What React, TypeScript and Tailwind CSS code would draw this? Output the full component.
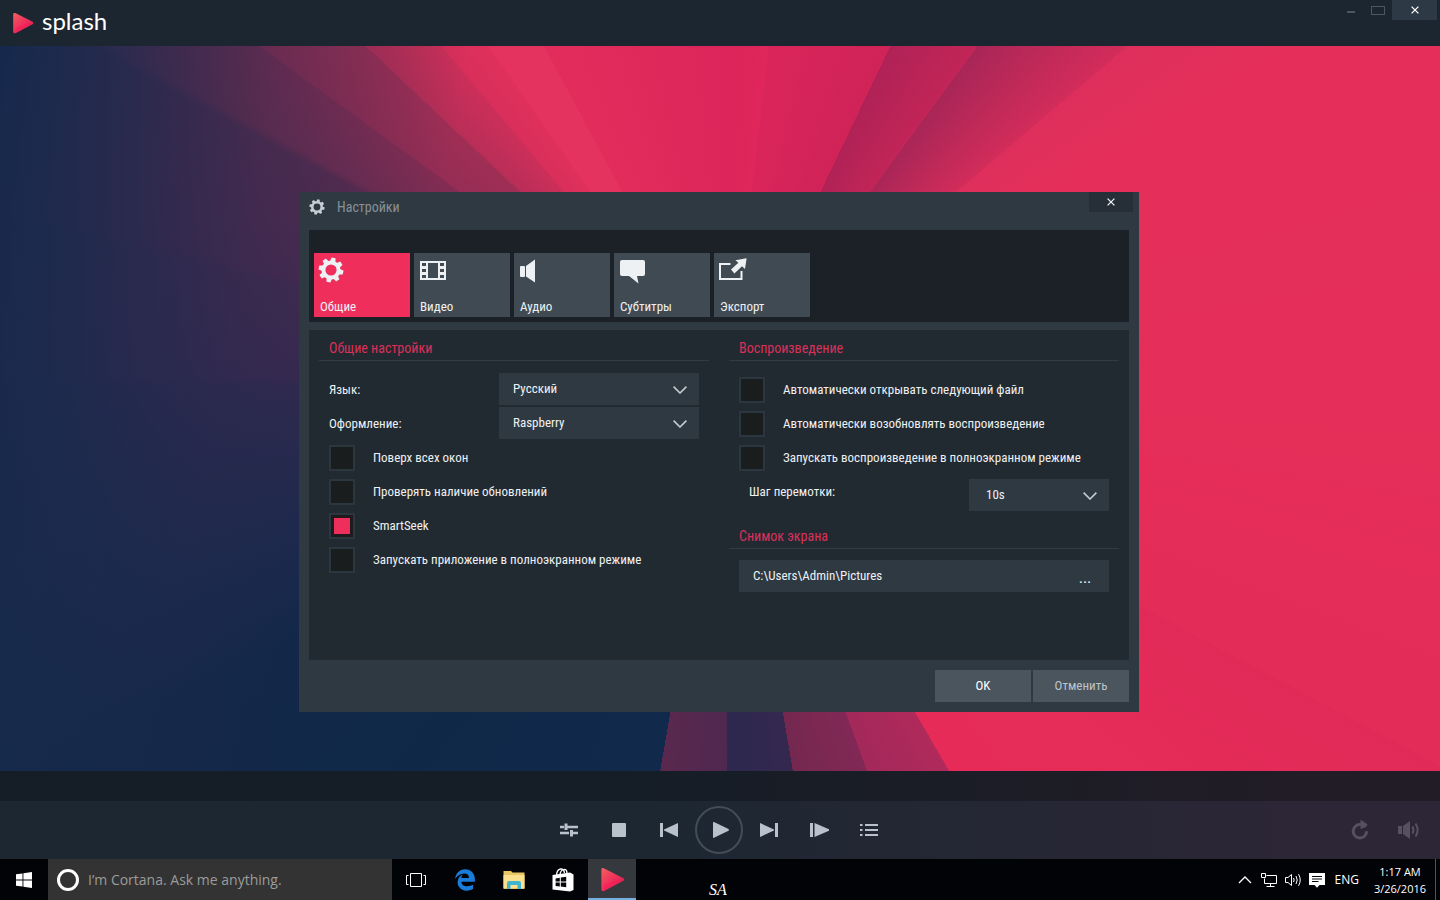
import type { ReactNode } from "react";
import { useState } from "react";
import { FaEdgeLegacy } from "react-icons/fa";

function PlayLogo({ className }: { className?: string }) {
  return (
    <svg viewBox="0 0 22 22" className={className} aria-hidden="true">
      <defs>
        <linearGradient id="play-logo" x1="0" y1="0" x2="1" y2="1">
          <stop offset="0" stopColor="#f0605f" />
          <stop offset="0.5" stopColor="#f0305c" />
          <stop offset="1" stopColor="#c81f4e" />
        </linearGradient>
      </defs>
      <path
        d="M1.2 1.6 Q1.6 0.6 3.4 1 L20.6 9.8 Q22.2 11 20.6 12.2 L4 21 Q1.6 21.8 1.2 20 Z"
        fill="url(#play-logo)"
      />
      <path d="M3.6 15.5 L17.5 10.8 L20 12 L3.6 20.4Z" fill="#ff0d55" opacity="0.35" />
    </svg>
  );
}

function Gear({ className }: { className?: string }) {
  const teeth = [0, 45, 90, 135, 180, 225, 270, 315];
  return (
    <svg viewBox="0 0 26 26" className={className} fill="currentColor" aria-hidden="true">
      <circle cx="13" cy="13" r="7.6" fill="none" stroke="currentColor" strokeWidth="4" />
      {teeth.map((deg) => (
        <path key={deg} d="M10.2 5 L11 0.6 H15 L15.8 5Z" transform={`rotate(${deg + 12} 13 13)`} />
      ))}
    </svg>
  );
}

function Cross({ className }: { className?: string }) {
  return (
    <svg viewBox="0 0 8 8" className={className} stroke="currentColor" strokeWidth="1.3" aria-hidden="true">
      <path d="M0.6 0.6 L7.4 7.4 M7.4 0.6 L0.6 7.4" />
    </svg>
  );
}

const TABS: { id: string; label: string; icon: ReactNode }[] = [
  { id: "general", label: "Общие", icon: <Gear className="size-[26px]" /> },
  {
    id: "video",
    label: "Видео",
    icon: (
      <svg viewBox="0 0 32 28" className="h-7 w-8" fill="currentColor" aria-hidden="true">
        <path
          fillRule="evenodd"
          d="M2 4H28V23H2Z M10 6V21H20V6Z M4 6V9H8V6Z M4 12V15H8V12Z M4 18V21H8V18Z M22 6V9H26V6Z M22 12V15H26V12Z M22 18V21H26V18Z"
        />
      </svg>
    ),
  },
  {
    id: "audio",
    label: "Аудио",
    icon: (
      <svg viewBox="0 0 32 28" className="h-7 w-8" fill="currentColor" aria-hidden="true">
        <rect x="2" y="9" width="5" height="11" rx="1" />
        <path d="M8 9 L17 2.4 V25.6 L8 19.5Z" />
      </svg>
    ),
  },
  {
    id: "subtitles",
    label: "Субтитры",
    icon: (
      <svg viewBox="0 0 32 28" className="h-7 w-8" fill="currentColor" aria-hidden="true">
        <path d="M4 3H25Q27 3 27 5V17Q27 19 25 19H19L20.5 26.5L11 19H4Q2 19 2 17V5Q2 3 4 3Z" />
      </svg>
    ),
  },
  {
    id: "export",
    label: "Экспорт",
    icon: (
      <svg viewBox="0 0 32 28" className="h-7 w-8" aria-hidden="true">
        <path d="M12.5 7H2V22H23.5V14" fill="none" stroke="currentColor" strokeWidth="2" />
        <path
          d="M28.6 1.2 L27 12 L24 9.2 L16.4 16.4 L13 12.6 L20.4 5.8 L17.4 3.2Z"
          fill="currentColor"
        />
      </svg>
    ),
  },
];

function SectionTitle({ children }: { children: ReactNode }) {
  return (
    <h2 className="mx-2.5 h-[31px] border-b border-[#323c45] px-2.5 pt-2 text-sm text-[#da3059]">
      {children}
    </h2>
  );
}

function CheckRow({ id, label, checked }: { id: string; label: string; checked?: boolean }) {
  return (
    <div className="flex h-[34px] items-center gap-[18px]">
      <input
        id={id}
        type="checkbox"
        defaultChecked={checked}
        className="size-[26px] appearance-none border-2 border-[#2c363f] bg-[#191d1e] checked:bg-[#ee2f5b] checked:shadow-[inset_0_0_0_3px_#20191e]"
      />
      <label htmlFor={id}>{label}</label>
    </div>
  );
}

function Select({ id, options, className }: { id: string; options: string[]; className: string }) {
  return (
    <div className={`relative ${className}`}>
      <select id={id} className="h-8 w-full appearance-none bg-[#2f3942] pr-9 pl-3.5 outline-none">
        {options.map((o) => (
          <option key={o}>{o}</option>
        ))}
      </select>
      <svg
        viewBox="0 0 14 8"
        className="pointer-events-none absolute top-[13px] right-3 h-2 w-3.5"
        fill="none"
        stroke="#c3cad0"
        strokeWidth="1.6"
        aria-hidden="true"
      >
        <path d="M0.6 0.6 L7 7 L13.4 0.6" />
      </svg>
    </div>
  );
}

function SettingsDialog() {
  const [tab, setTab] = useState("general");

  return (
    <section
      role="dialog"
      aria-label="Настройки"
      className="w-[840px] bg-[#2f3941] px-2.5 pb-2.5 font-['Roboto_Condensed','Roboto',sans-serif] text-[13px] leading-5 text-[#eef1f3]"
    >
      <header className="flex h-[38px] items-start justify-between">
        <div className="flex items-center gap-3 pt-[5px]">
          <Gear className="size-4 text-[#c6cdd3]" />
          <h1 className="text-sm text-[#87919a]">Настройки</h1>
        </div>
        <button
          type="button"
          aria-label="Закрыть"
          className="-mr-1 flex h-5 w-11 items-center justify-center bg-[#262f38]"
        >
          <Cross className="size-2" />
        </button>
      </header>

      <nav className="flex gap-1 bg-[#1c2127] px-[5px] pt-[23px] pb-[5px]">
        {TABS.map((t) => (
          <button
            key={t.id}
            type="button"
            onClick={() => setTab(t.id)}
            className={`flex h-16 w-24 flex-col items-start justify-between px-1 pt-1 text-left ${
              tab === t.id ? "bg-[#f02e5b]" : "bg-[#404a52]"
            }`}
          >
            {t.icon}
            <span className="px-0.5">{t.label}</span>
          </button>
        ))}
      </nav>

      <div className="mt-2 grid min-h-[330px] grid-cols-2 bg-[#222a31]">
        <div>
          <SectionTitle>Общие настройки</SectionTitle>
          <div className="px-5 pt-3">
            <div className="flex h-[34px] justify-between">
              <label htmlFor="language" className="self-center">
                Язык:
              </label>
              <Select id="language" options={["Русский", "English"]} className="w-[200px]" />
            </div>
            <div className="flex h-[34px] justify-between">
              <label htmlFor="theme" className="self-center">
                Оформление:
              </label>
              <Select id="theme" options={["Raspberry"]} className="w-[200px]" />
            </div>
            <CheckRow id="on-top" label="Поверх всех окон" />
            <CheckRow id="updates" label="Проверять наличие обновлений" />
            <CheckRow id="smartseek" label="SmartSeek" checked />
            <CheckRow id="app-fullscreen" label="Запускать приложение в полноэкранном режиме" />
          </div>
        </div>

        <div>
          <SectionTitle>Воспроизведение</SectionTitle>
          <div className="px-5 pt-3">
            <CheckRow id="open-next" label="Автоматически открывать следующий файл" />
            <CheckRow id="resume" label="Автоматически возобновлять воспроизведение" />
            <CheckRow id="play-fullscreen" label="Запускать воспроизведение в полноэкранном режиме" />
            <div className="flex items-start justify-between pl-2.5">
              <label htmlFor="seek-step" className="pt-[7px]">
                Шаг перемотки:
              </label>
              <Select id="seek-step" options={["10s", "30s"]} className="mt-1 w-[140px] [&>select]:pl-[17px]" />
            </div>
          </div>
          <div className="pt-[7px]">
            <SectionTitle>Снимок экрана</SectionTitle>
            <div className="mx-5 mt-[11px] flex h-8 bg-[#2f3942]">
              <input
                type="text"
                aria-label="Снимок экрана"
                defaultValue="C:\Users\Admin\Pictures"
                className="min-w-0 flex-1 pl-3.5 outline-none"
              />
              <button type="button" aria-label="Обзор" className="w-12 pt-1 text-base">
                ...
              </button>
            </div>
          </div>
        </div>
      </div>

      <footer className="mt-2.5 flex justify-end gap-0.5">
        <button type="button" className="h-8 w-24 bg-[#4b555d] text-white">
          OK
        </button>
        <button type="button" className="h-8 w-24 bg-[#4b555d] text-[#bcc4ca]">
          Отменить
        </button>
      </footer>
    </section>
  );
}

const CONTROLS: { label: string; icon: ReactNode }[] = [
  {
    label: "Equalizer",
    icon: (
      <g stroke="currentColor">
        <path d="M2 9H6M9 9H20M2 15H11M15 15H20" strokeWidth="2.6" />
        <path d="M8 5.5V12M13.5 12V18.5" strokeWidth="3" />
      </g>
    ),
  },
  { label: "Stop", icon: <rect x="4" y="5" width="14" height="14" rx="1" /> },
  { label: "Previous", icon: <path d="M2 5H5V19H2Z M20 5V19L6 12.6V11.4Z" /> },
  { label: "Play", icon: <path d="M5 4.5 Q5 3.6 6 4 L20.5 11 Q21.5 12 20.5 12.8 L6 19.8 Q5 20.2 5 19.3Z" /> },
  { label: "Next", icon: <path d="M17 5H20V19H17Z M2 5V19L16 12.6V11.4Z" /> },
  { label: "Frame step", icon: <path d="M2 5H5V19H2Z M6.5 5L21 11.2V12.8L6.5 19Z" /> },
  {
    label: "Playlist",
    icon: (
      <path
        d="M2 7H4.5M7 7H20M2 12H4.5M7 12H20M2 17H4.5M7 17H20"
        stroke="currentColor"
        strokeWidth="2"
      />
    ),
  },
];

function PlayerControls() {
  return (
    <div className="grid h-[58px] grid-cols-[1fr_auto_1fr] items-center bg-linear-to-r from-[#1c2732] from-45% to-[#2c2636] to-90% pr-0.5 text-[#b9c1cb]">
      <div />
      <div className="flex items-center">
        {CONTROLS.map((c) => (
          <button
            key={c.label}
            type="button"
            aria-label={c.label}
            className={`flex h-12 items-center justify-center ${
              c.label === "Play" ? "mx-px w-12 rounded-full border-2 border-[#434d57]" : "w-[50px]"
            }`}
          >
            <svg viewBox="0 0 22 24" className="h-6 w-[22px]" fill="currentColor" aria-hidden="true">
              {c.icon}
            </svg>
          </button>
        ))}
      </div>
      <div className="flex justify-end gap-6 pr-4 text-[#555160]">
        <button type="button" aria-label="Repeat">
          <svg viewBox="0 0 24 24" className="size-6" fill="none" aria-hidden="true">
            <path d="M14.5 6.6 H12 A6.7 6.7 0 1 0 18.6 13.2" stroke="currentColor" strokeWidth="3" />
            <path d="M12.5 1.6 L19.6 6.4 L18 9 L12.5 11Z" fill="currentColor" />
          </svg>
        </button>
        <button type="button" aria-label="Volume">
          <svg viewBox="0 0 26 24" className="h-6 w-[26px]" fill="currentColor" aria-hidden="true">
            <path d="M2 8H6V16H2Z M7 8L14 3V21L7 16Z" />
            <path
              d="M16.5 8.5Q18.5 12 16.5 15.5M19.5 5.5Q23.8 12 19.5 18.5"
              fill="none"
              stroke="currentColor"
              strokeWidth="2"
            />
          </svg>
        </button>
      </div>
    </div>
  );
}

function Taskbar() {
  return (
    <footer className="flex h-[41px] items-stretch bg-[#020306] font-['Open_Sans','Noto_Sans',sans-serif] text-white">
      <button type="button" aria-label="Start" className="flex w-12 items-center justify-center">
        <svg viewBox="0 0 16 16" className="size-4" fill="currentColor" aria-hidden="true">
          <path d="M0 2.3L6.5 1.4V7.5H0Z M7.4 1.2L16 0V7.5H7.4Z M0 8.4H6.5V14.6L0 13.7Z M7.4 8.4H16V16L7.4 14.8Z" />
        </svg>
      </button>

      <label className="flex w-[344px] items-center gap-[9px] bg-[#333333] pl-[9px]">
        <span className="size-[22px] rounded-full border-[3px] border-white" />
        <input
          type="search"
          aria-label="Cortana"
          placeholder="I’m Cortana. Ask me anything."
          className="min-w-0 flex-1 text-[14px] outline-none placeholder:text-[#9b9b9b]"
        />
      </label>

      <div className="flex gap-px">
        <button type="button" aria-label="Task view" className="flex w-12 items-center justify-center">
          <svg viewBox="0 0 20 14" className="h-3.5 w-5" fill="none" stroke="currentColor" aria-hidden="true">
            <path d="M4.5 0.5H15.5V13.5H4.5Z M2.5 2.5H0.5V11.5H2.5 M17.5 2.5H19.5V11.5H17.5" />
          </svg>
        </button>
        <button type="button" aria-label="Edge" className="flex w-12 items-center justify-center">
          <FaEdgeLegacy className="size-[22px] text-[#1a7bd8]" />
        </button>
        <button type="button" aria-label="File Explorer" className="flex w-12 items-center justify-center">
          <svg viewBox="0 0 22 20" className="h-5 w-[22px]" aria-hidden="true">
            <path d="M0.5 1H8L9.5 2.5H21.5V19H0.5Z" fill="#e9c864" />
            <path d="M0.5 5H21.5V18H0.5Z" fill="#fbe08d" />
            <path d="M4 19V13Q4 11 6 11H16Q18 11 18 13V19H14.5V15H7.5V19Z" fill="#41b4cf" />
          </svg>
        </button>
        <button type="button" aria-label="Store" className="flex w-12 items-center justify-center">
          <svg viewBox="0 0 22 24" className="h-6 w-[22px]" aria-hidden="true">
            <path d="M4.5 7Q5 1.5 8.5 1Q12 0.8 12.5 5M8 6Q9 1.6 12.5 1.4Q15 1.6 15 5" fill="none" stroke="#fff" strokeWidth="1.3" />
            <path d="M0.5 7L18 4.5L21.5 6.5V22L18 23.5L0.5 21.5Z" fill="#fff" />
            <path
              d="M3.6 10.4L7.8 9.8V13.6H3.6Z M8.8 9.6L14.2 8.8V13.6H8.8Z M3.6 14.6H7.8V18.4L3.6 17.9Z M8.8 14.6H14.2V19.2L8.8 18.5Z"
              fill="#05070a"
            />
          </svg>
        </button>
        <button
          type="button"
          aria-label="Splash"
          className="flex w-12 items-center justify-center border-b-2 border-[#76aee0] bg-[#35383d] pt-0.5"
        >
          <PlayLogo className="size-[25px]" />
        </button>
      </div>

      <span className="ml-[73px] self-end font-['Liberation_Serif',serif] text-base leading-[21px] italic">SA</span>

      <div className="ml-auto flex items-center gap-2 pr-1">
        <svg viewBox="0 0 16 16" className="size-4" fill="none" stroke="currentColor" strokeWidth="1.3" aria-hidden="true">
          <path d="M2 11L8 5L14 11" />
        </svg>
        <svg viewBox="0 0 16 16" className="size-4" fill="none" stroke="currentColor" aria-hidden="true">
          <path d="M5.5 3.5H15.5V11.5H3.5V6.5M9.5 11.5V14.5M5.5 14.5H13.5M0.5 1.5H4.5V5.5H0.5Z" />
        </svg>
        <svg viewBox="0 0 16 16" className="size-4" fill="none" stroke="currentColor" aria-hidden="true">
          <path d="M0.5 5.5H3L6.5 2.5V13.5L3 10.5H0.5Z M8.5 6Q9.8 8 8.5 10M11 4Q13.4 8 11 12M13.5 2.2Q17 8 13.5 13.8" />
        </svg>
        <svg viewBox="0 0 16 16" className="size-4" aria-hidden="true">
          <path d="M0 1H16V13H10.5L8 15.8L5.5 13H0Z" fill="#fff" />
          <path d="M3 4.5H13M3 7H13M3 9.5H9.5" stroke="#05070a" />
        </svg>
        <span className="ml-0.5 text-xs">ENG</span>
        <time className="ml-1.5 w-[54px] text-center text-[11px] leading-[17px] whitespace-nowrap">
          1:17 AM
          <br />
          3/26/2016
        </time>
        <span className="h-full w-px bg-[#50545a]" />
      </div>
    </footer>
  );
}

export default function App() {
  return (
    <div className="flex min-h-screen flex-col bg-[#1b2631]">
      <header className="flex h-[46px] items-start justify-between bg-[#1c2631]">
        <div className="flex h-full items-center gap-2 pl-3">
          <PlayLogo className="size-[22px]" />
          <span className="pb-1 font-['Lato',sans-serif] text-2xl text-white">splash</span>
        </div>
        <div className="flex pr-[3px] text-[#4b5862]">
          <button type="button" aria-label="Minimize" className="flex h-5 w-[27px] items-center justify-center pt-1">
            <span className="h-0.5 w-2 bg-current" />
          </button>
          <button type="button" aria-label="Maximize" className="flex h-5 w-7 items-center justify-center">
            <span className="h-[9px] w-3.5 border border-current" />
          </button>
          <button type="button" aria-label="Close" className="flex h-5 w-[45px] items-center justify-center bg-[#2d3944] text-white">
            <Cross className="size-2" />
          </button>
        </div>
      </header>

      {/* light rays fan out from a point just above the middle of the video area */}
      <main className="flex flex-1 items-start justify-center bg-[linear-gradient(100deg,#15294c_0%,#162a4cc0_8%,#1c294c58_18%,#2a2a4c00_30%),conic-gradient(from_0deg_at_50.5%_47%,#dc255a_0deg,#e0265b_7deg,#da255a_7deg,#d02358_25.6deg,#b02256_25.6deg,#c22557_36.3deg,#a82657_36.3deg,#d22c5a_49.6deg,#de2f5c_49.6deg,#e52f5a_60deg,#e42f5a_80deg,#e62d59_100deg,#e42c59_118deg,#e22a58_118deg,#e62c59_135deg,#e62b59_150deg,#b02a5a_150deg,#a2295a_160deg,#822856_160deg,#74284f_170.3deg,#35284f_170.3deg,#2c284e_180deg,#4f2850_180deg,#5a284f_189.9deg,#11294b_189.9deg,#102848_220deg,#122849_240deg,#1f294d_252deg,#2a294e_262deg,#352950_270deg,#3c2950_271deg,#472a50_283deg,#4e2a50_284deg,#5c2b50_298deg,#752d52_299deg,#842c53_306deg,#952d54_306.1deg,#a02e55_313.3deg,#b82e57_313.3deg,#cc2f59_320deg,#d82f5a_320deg,#e0305c_325deg,#e5335f_325deg,#e5335f_331.7deg,#e22d5c_331.7deg,#dc255a_360deg)] pt-[146px] pr-0.5 pb-[59px]">
        <SettingsDialog />
      </main>

      <div className="h-[30px] bg-linear-to-r from-[#151d26] from-45% to-[#211c26] to-90%" />
      <PlayerControls />
      <Taskbar />
    </div>
  );
}
